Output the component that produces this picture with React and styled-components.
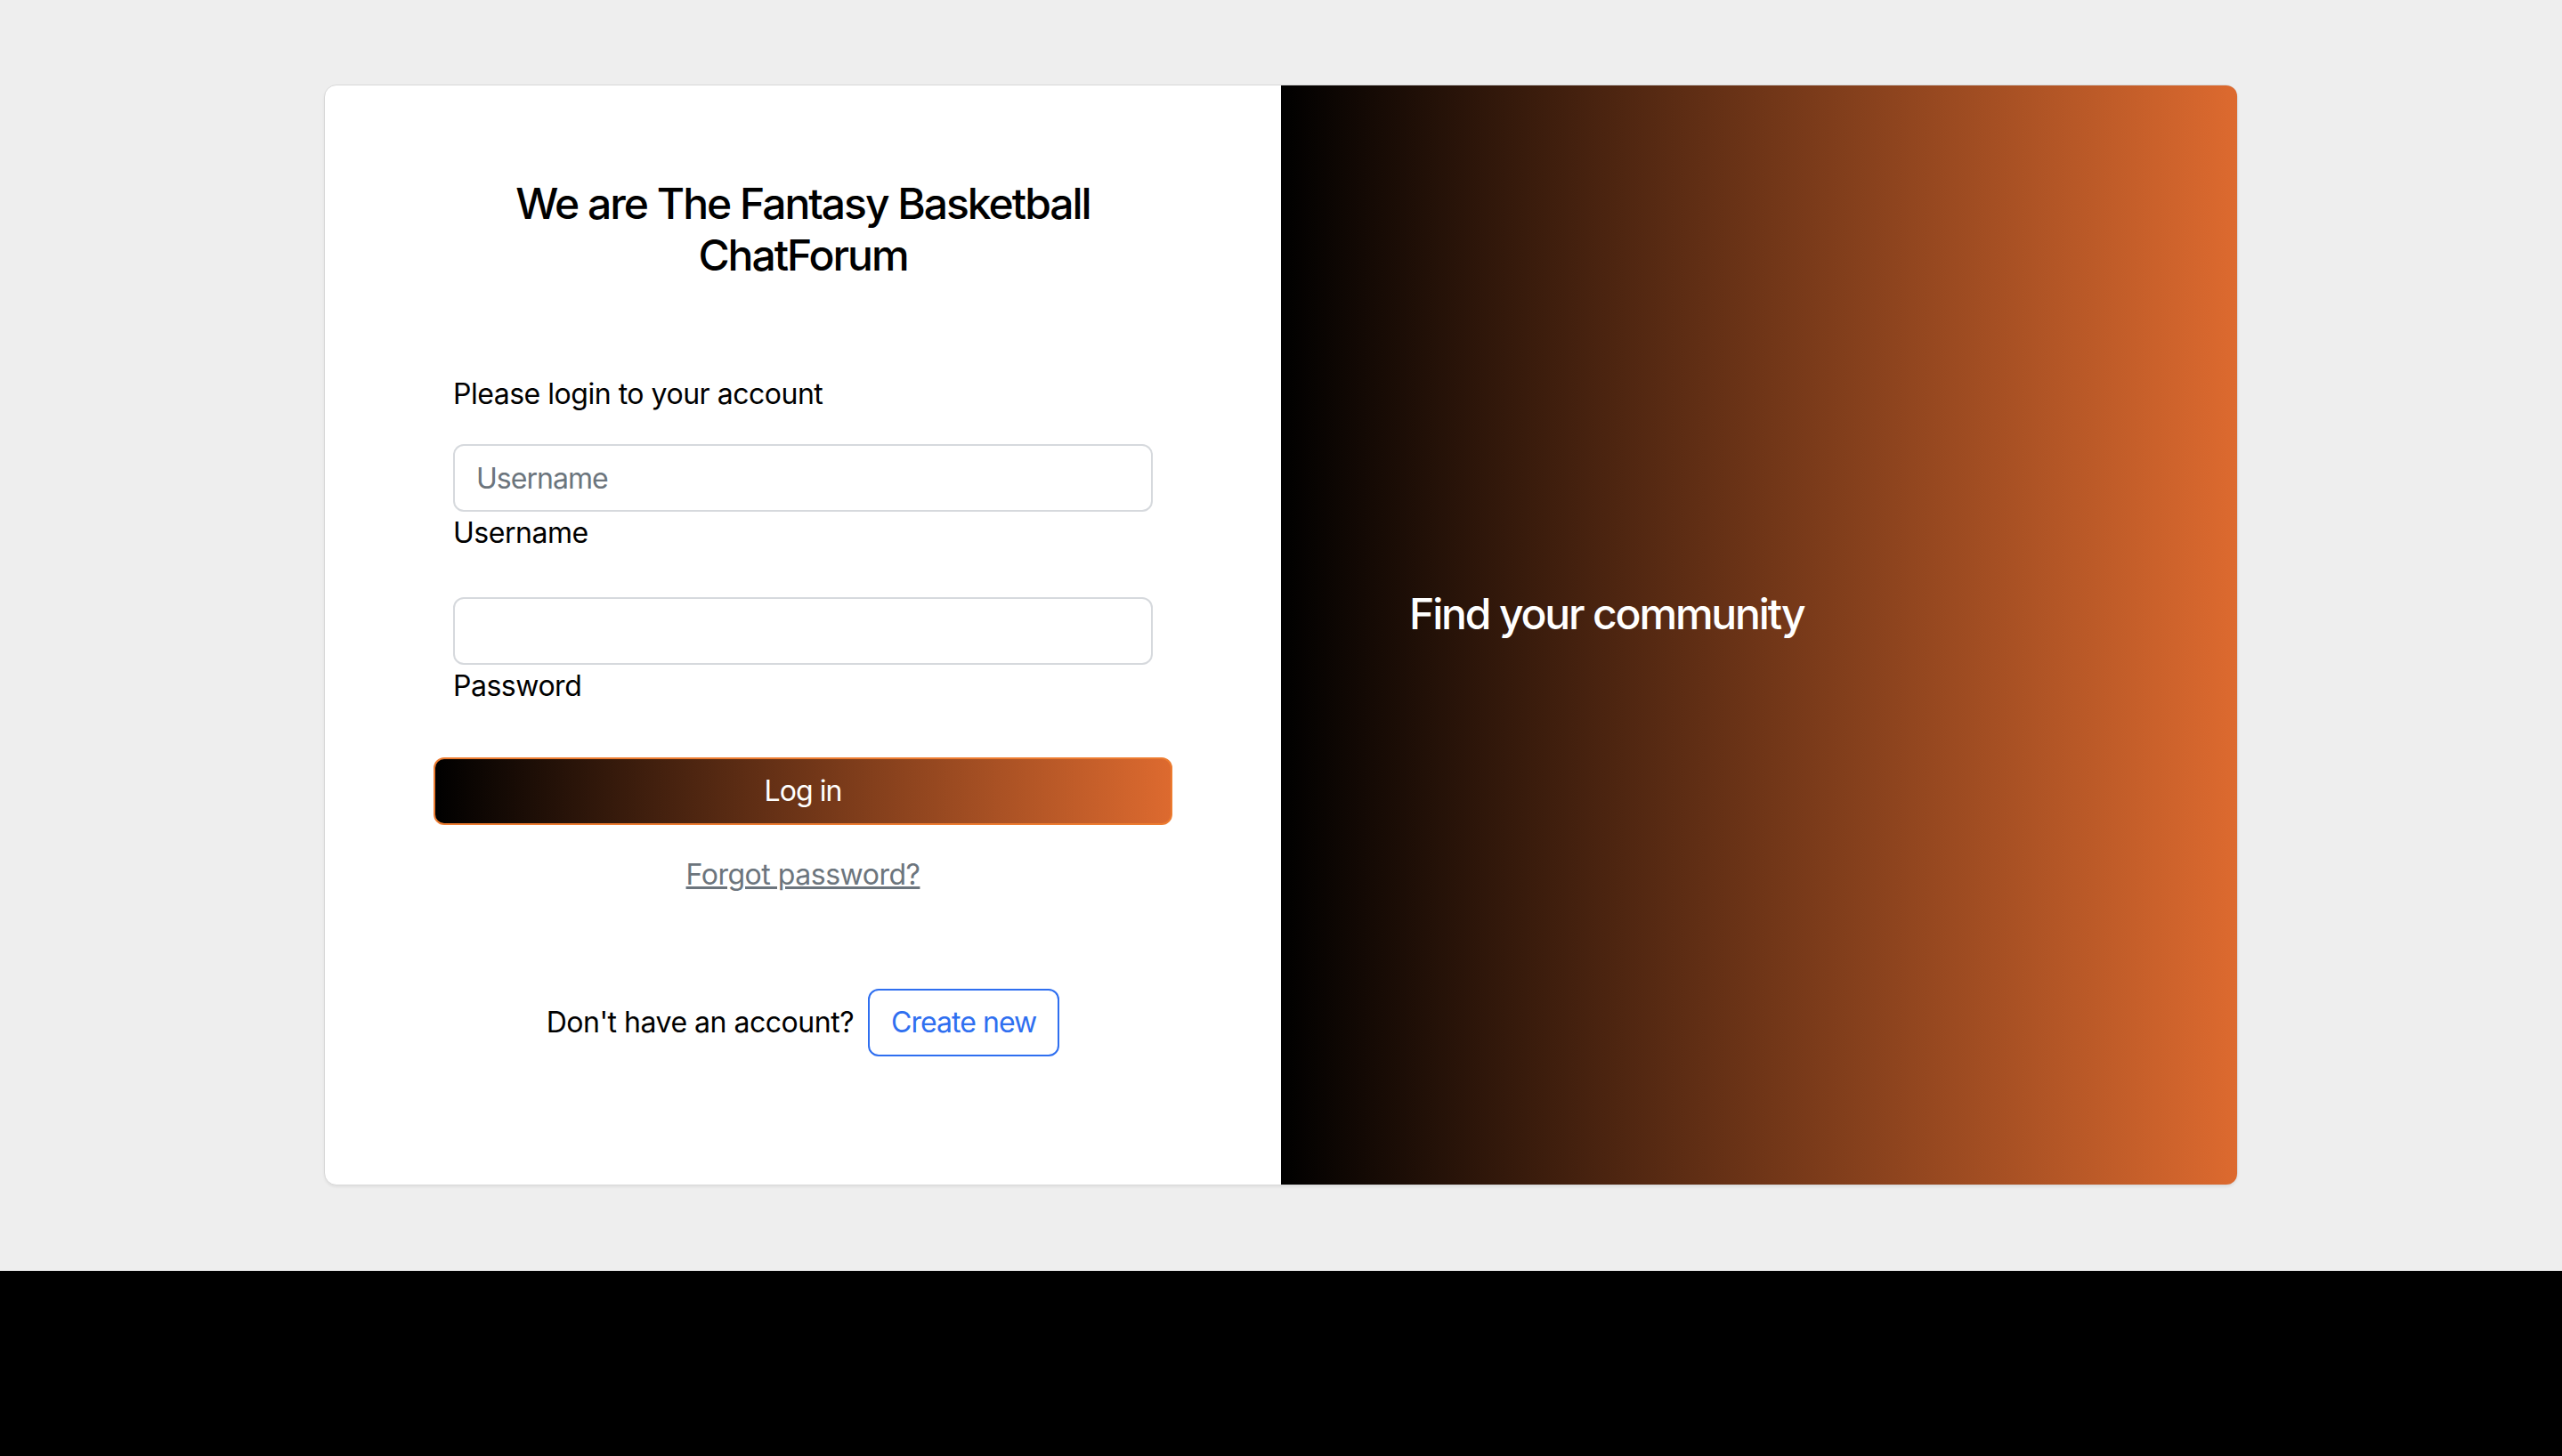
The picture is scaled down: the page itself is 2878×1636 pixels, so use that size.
import React from 'react';
import styled, { createGlobalStyle } from 'styled-components';

const GlobalStyle = createGlobalStyle`
  html, body {
    margin: 0;
    padding: 0;
    background: #000;
  }
  body {
    font-family: Inter, "Noto Sans", "Liberation Sans", sans-serif;
    color: #000;
    letter-spacing: -0.03em;
  }
  * {
    box-sizing: border-box;
  }
`;

const brandGradient = 'linear-gradient(to right, #000000, #dd6a2f)';

const Section = styled.section`
  background-color: #eee;
  padding: 95px 0 96px;
`;

const Card = styled.div`
  width: 2150px;
  margin: 0 auto;
  display: grid;
  grid-template-columns: 1fr 1fr;
  background: #fff;
  border: 1px solid #d8d8d8;
  border-radius: 14px;
  box-shadow: 0 2px 3px rgba(0, 0, 0, 0.06);
`;

const FormSide = styled.div`
  margin: 0 48px;
  padding: 96px;
`;

const Title = styled.h4`
  margin: 8px 0 96px;
  padding-bottom: 8px;
  text-align: center;
  font-size: 48px;
  font-weight: 500;
  line-height: 1.2;
  letter-spacing: -0.042em;
`;

const Intro = styled.p`
  margin: 0 0 32px;
  font-size: 32px;
  line-height: 48px;
`;

const Field = styled.div`
  margin-bottom: 48px;
`;

const Input = styled.input`
  display: block;
  width: 100%;
  height: 76px;
  padding: 12px 24px;
  font-family: inherit;
  font-size: 32px;
  letter-spacing: -0.03em;
  color: #212529;
  background: #fff;
  border: 2px solid #d6d9dd;
  border-radius: 12px;
  outline: none;

  &::placeholder {
    color: #6c757d;
  }
`;

const Label = styled.label`
  display: block;
  font-size: 32px;
  line-height: 48px;
`;

const Actions = styled.div`
  text-align: center;
  padding: 8px 0;
  margin-bottom: 96px;
`;

const LoginButton = styled.button`
  display: block;
  width: calc(100% + 44px);
  height: 76px;
  margin: 0 -22px 32px;
  background: ${brandGradient};
  border: 2px solid #ec7b30;
  border-radius: 12px;
  color: #fff;
  font-family: inherit;
  font-size: 32px;
  line-height: 48px;
  letter-spacing: -0.03em;
  cursor: pointer;
`;

const ForgotLink = styled.a`
  font-size: 32px;
  line-height: 48px;
  color: #6c757d;
  text-decoration: underline;
`;

const SignupRow = styled.div`
  display: flex;
  align-items: center;
  justify-content: center;
  gap: 16px;
  padding-bottom: 48px;
`;

const SignupText = styled.p`
  margin: 0;
  font-size: 32px;
  line-height: 48px;
`;

const OutlineButton = styled.button`
  height: 76px;
  padding: 12px 24px;
  background: #fff;
  border: 2px solid ${(p) => p.color || '#2f6ff0'};
  border-radius: 12px;
  color: ${(p) => p.color || '#2f6ff0'};
  font-family: inherit;
  font-size: 32px;
  line-height: 48px;
  letter-spacing: -0.03em;
  cursor: pointer;
`;

const BrandSide = styled.div`
  display: flex;
  align-items: center;
  background: ${brandGradient};
  border-radius: 0 12px 12px 0;
`;

const BrandInner = styled.div`
  margin: 0 48px;
  padding: 96px;
  color: #fff;
`;

const BrandTitle = styled.h4`
  margin: 0 0 48px;
  font-size: 48px;
  font-weight: 500;
  line-height: 1.2;
  letter-spacing: -0.045em;
`;

export default function App() {
  return (
    <>
      <GlobalStyle />
      <Section>
        <Card>
          <FormSide>
            <Title>We are The Fantasy Basketball ChatForum</Title>
            <form onSubmit={(e) => e.preventDefault()}>
              <Intro>Please login to your account</Intro>
              <Field>
                <Input id="username" type="text" placeholder="Username" />
                <Label htmlFor="username">Username</Label>
              </Field>
              <Field>
                <Input id="password" type="password" />
                <Label htmlFor="password">Password</Label>
              </Field>
              <Actions>
                <LoginButton type="button">Log in</LoginButton>
                <ForgotLink href="#!">Forgot password?</ForgotLink>
              </Actions>
              <SignupRow>
                <SignupText>Don't have an account?</SignupText>
                <OutlineButton type="button">Create new</OutlineButton>
              </SignupRow>
            </form>
          </FormSide>
          <BrandSide>
            <BrandInner>
              <BrandTitle>Find your community</BrandTitle>
            </BrandInner>
          </BrandSide>
        </Card>
      </Section>
    </>
  );
}
